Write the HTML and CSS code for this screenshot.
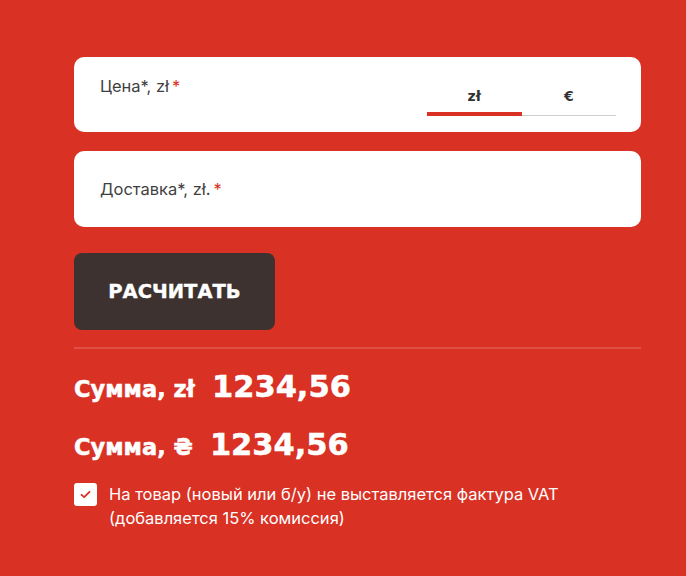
FILE: index.html
```html
<!DOCTYPE html>
<html lang="ru">
<head>
<meta charset="utf-8">
<link rel="stylesheet" href="styles.css">
</head>
<body>
<div class="calc">
  <div class="card card-price">
    <div class="label">Цена*, zł<span class="req">*</span></div>
    <div class="tabs">
      <div class="tab active">zł</div>
      <div class="tab">€</div>
    </div>
  </div>
  <div class="card card-delivery">
    <div class="label">Доставка*, zł.<span class="req">*</span></div>
  </div>
  <button class="btn">РАСЧИТАТЬ</button>
  <div class="divider"></div>
  <div class="sum">
    <span class="sum-label">Сумма, zł</span>
    <span class="sum-value">1234,56</span>
  </div>
  <div class="sum sum-uah">
    <span class="sum-label">Сумма, ₴</span>
    <span class="sum-value">1234,56</span>
  </div>
  <label class="check">
    <span class="box">
      <svg width="11" height="9" viewBox="0 0 11 9"><path d="M1.5 4.8 L4.2 7.2 L9.5 1.8" fill="none" stroke="#d93125" stroke-width="1.8" stroke-linecap="round" stroke-linejoin="round"/></svg>
    </span>
    <span class="check-text">На товар (новый или б/у) не выставляется фактура VAT<br>(добавляется 15% комиссия)</span>
  </label>
</div>
</body>
</html>
```

FILE: styles.css
```css
html, body {
  margin: 0;
  padding: 0;
  background: #d93124;
}
body {
  font-family: Inter, "Noto Sans", sans-serif;
  width: 686px;
  height: 576px;
  overflow: hidden;
}
.calc {
  padding: 57px 45px 0 74px;
  display: flex;
  flex-direction: column;
  align-items: flex-start;
}
.card {
  box-sizing: border-box;
  width: 567px;
  background: #fff;
  border-radius: 10px;
  display: flex;
  justify-content: space-between;
}
.card-price {
  height: 75px;
  padding: 19px 25px 0 26px;
}
.card-delivery {
  margin-top: 19px;
  height: 76px;
  padding: 0 26px;
  align-items: center;
}
.label {
  font-size: 16.5px;
  color: #3f3f3f;
  line-height: 20px;
}
.req {
  color: #d93124;
  margin-left: 3px;
}
.tabs {
  display: flex;
  width: 189px;
  margin-top: 10px;
  align-self: flex-start;
}
.tab {
  flex: 1;
  text-align: center;
  font-family: "DejaVu Sans", sans-serif;
  font-weight: 700;
  font-size: 14px;
  color: #333;
  height: 30px;
  line-height: 20px;
  box-sizing: border-box;
  border-bottom: 1px solid #cfcfcf;
}
.tab.active {
  border-bottom: 4px solid #d93124;
}
.btn {
  margin-top: 26px;
  width: 201px;
  height: 77px;
  background: #3d3230;
  color: #fff;
  border: none;
  border-radius: 8px;
  font-family: "DejaVu Sans", sans-serif;
  font-weight: 700;
  font-size: 19.5px;
  -webkit-text-stroke: 0.4px #fff;
  padding: 0;
}
.divider {
  margin-top: 17px;
  width: 567px;
  height: 2px;
  background: rgba(255,255,255,0.15);
}
.sum {
  display: flex;
  align-items: baseline;
  gap: 17px;
  color: #fff;
  font-family: "DejaVu Sans", sans-serif;
  font-weight: 700;
  -webkit-text-stroke: 0.5px #fff;
  margin-top: 20px;
  height: 40px;
}
.sum-uah { margin-top: 18px; }
.sum-label {
  font-size: 22.5px;
}
.sum-value {
  font-size: 30.5px;
}
.check {
  display: flex;
  gap: 12px;
  margin-top: 15px;
  align-items: flex-start;
}
.box {
  width: 23px;
  height: 23px;
  background: #fff;
  border-radius: 3px;
  display: flex;
  align-items: center;
  justify-content: center;
  flex: none;
  margin-top: 1px;
}
.check-text {
  color: #fff;
  font-size: 16.5px;
  line-height: 24px;
}
```
